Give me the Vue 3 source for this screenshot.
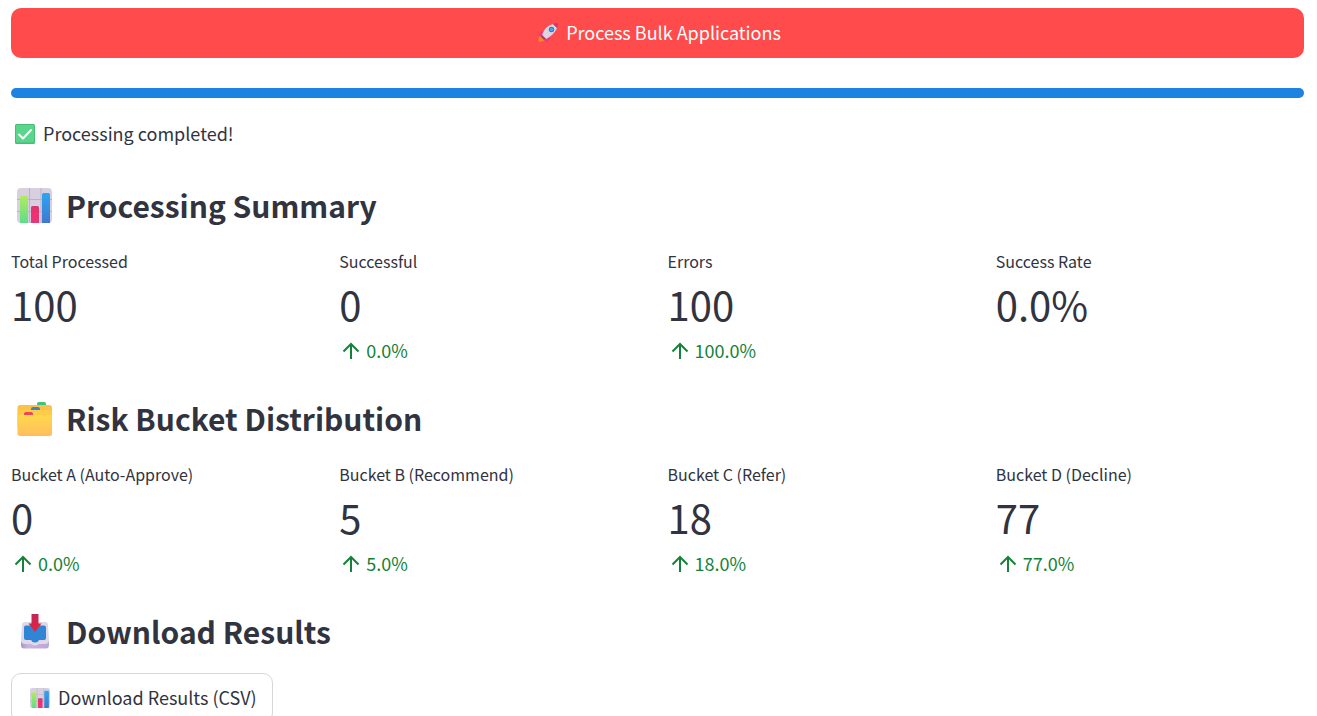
<script setup>
const sections = [
  {
    title: 'Processing Summary',
    icon: 'chart',
    metrics: [
      { label: 'Total Processed', value: '100' },
      { label: 'Successful', value: '0', delta: '0.0%' },
      { label: 'Errors', value: '100', delta: '100.0%' },
      { label: 'Success Rate', value: '0.0%' },
    ],
  },
  {
    title: 'Risk Bucket Distribution',
    icon: 'folder',
    metrics: [
      { label: 'Bucket A (Auto-Approve)', value: '0', delta: '0.0%' },
      { label: 'Bucket B (Recommend)', value: '5', delta: '5.0%' },
      { label: 'Bucket C (Refer)', value: '18', delta: '18.0%' },
      { label: 'Bucket D (Decline)', value: '77', delta: '77.0%' },
    ],
  },
]
</script>

<template>
  <svg class="defs" width="0" height="0" aria-hidden="true">
    <defs>
      <linearGradient id="g-green" x1="0" y1="0" x2="0" y2="1">
        <stop offset="0" stop-color="#b0ec5c" /><stop offset="1" stop-color="#5fdc8c" />
      </linearGradient>
      <linearGradient id="g-pink" x1="0" y1="0" x2="0" y2="1">
        <stop offset="0" stop-color="#d03a72" /><stop offset="0.4" stop-color="#f03070" /><stop offset="1" stop-color="#e03a78" />
      </linearGradient>
      <linearGradient id="g-blue" x1="0" y1="0" x2="0" y2="1">
        <stop offset="0" stop-color="#2ca6f4" /><stop offset="1" stop-color="#3f78cc" />
      </linearGradient>
      <linearGradient id="g-folder" x1="0" y1="0" x2="0" y2="1">
        <stop offset="0" stop-color="#ffd84c" /><stop offset="1" stop-color="#ffbe5c" />
      </linearGradient>
      <linearGradient id="g-arrow" x1="0" y1="0" x2="0" y2="1">
        <stop offset="0" stop-color="#c02858" /><stop offset="1" stop-color="#e4243c" />
      </linearGradient>
      <linearGradient id="g-tray" x1="0" y1="0" x2="1" y2="0">
        <stop offset="0" stop-color="#a898b8" /><stop offset="0.25" stop-color="#c8b4e0" /><stop offset="1" stop-color="#bba6d6" />
      </linearGradient>
      <symbol id="chart" viewBox="0 0 35 35">
        <rect width="35" height="35" rx="4" fill="#d8d0e0" />
        <path d="M0 11.500H35M0 23.500H35M12.500 0V35M24 0V35" stroke="#bcb2c4" stroke-width="1" />
        <path d="M3 35V9.500Q3 8 4.500 8H9.500Q11 8 11 9.500V35Z" fill="url(#g-green)" />
        <path d="M14 35V19.500Q14 18 15.500 18H20.500Q22 18 22 19.500V35Z" fill="url(#g-pink)" />
        <path d="M25 35V6.500Q25 5 26.500 5H31.500Q33 5 33 6.500V35Z" fill="url(#g-blue)" />
      </symbol>
      <symbol id="folder" viewBox="0 0 35 35">
        <path d="M20 6V3Q20 1 22 1H27Q29 1 29 3V6Z" fill="#3fc07c" />
        <path d="M.5 7Q.5 4 3 4H32Q35 4 35 7V25H.500Z" fill="#fac248" />
        <path d="M14 11V8Q14 6 16 6H21Q23 6 23 8V11Z" fill="#3f84c8" />
        <path d="M.500 11Q.500 9 3 9H32Q35 9 35 11V28H.500Z" fill="#ffcc48" />
        <path d="M7 16V13Q7 11 9 11H14Q16 11 16 13V16Z" fill="#f04458" />
        <path d="M.500 16Q.500 14 3 14H32Q35 14 35 16V32.500Q35 35 32.500 35H3Q.500 35 .500 32.500Z" fill="url(#g-folder)" />
      </symbol>
      <symbol id="inbox" viewBox="0 0 35 35">
        <path d="M4 27H32V31Q32 34.500 29 34.500H7Q4 34.500 4 31Z" fill="url(#g-tray)" />
        <path d="M8 8H28Q31 8 31 11L32 26Q32 30 28 30H22Q18 33 14 30H8Q4 30 4 26L5 11Q5 8 8 8Z" fill="#e0d8e8" />
        <path d="M9 11.500H27Q29 11.500 29 13.500V24Q29 26 27 26H22Q21 28.500 18 28.500Q15 28.500 14 26H9Q7 26 7 24V13.500Q7 11.500 9 11.500Z" fill="#2f86d4" />
        <path d="M14.500 0H21.500V9.500H24.500L18 18L11.500 9.500H14.500Z" fill="url(#g-arrow)" />
      </symbol>
      <symbol id="check" viewBox="0 0 20 20">
        <rect width="20" height="20" rx="1.500" fill="#46be78" />
        <rect x="1" y="1" width="18" height="17.500" rx="1" fill="#5ad68c" />
        <path d="M4 10.500L8 14.500L16 6" fill="none" stroke="#fff" stroke-width="2" stroke-linecap="round" stroke-linejoin="round" />
      </symbol>
      <symbol id="rocket" viewBox="0 0 20 20">
        <path d="M1 14Q4 12 6 15Q8 17 5 18L1 19Q0 17 1 14Z" fill="#f08a28" />
        <path d="M1 13Q1 9 4 8L8 7L6 13ZM7 15L13 12Q13 17 9 19Q8 20 7 18Z" fill="#f0387c" />
        <path d="M4 12Q7 3 15 1L19 5Q16 12 8 16Z" fill="#ddd5e2" />
        <path d="M15 1Q18 0 20 0Q20 3 19 5Z" fill="#d63468" />
        <path d="M4 12L8 16L6 17L3 14Z" fill="#b83866" />
        <circle cx="13.500" cy="6.500" r="2.700" fill="#526d9a" /><circle cx="13.500" cy="6.500" r="1.800" fill="#42a5ed" />
      </symbol>
    </defs>
  </svg>
  <main class="page">
    <button class="primary" type="button">
      <svg class="emoji" aria-hidden="true"><use href="#rocket" /></svg>
      <span class="text">Process Bulk Applications</span>
    </button>
    <div class="progress" role="progressbar" aria-label="Processing" aria-valuenow="100" aria-valuemin="0" aria-valuemax="100"></div>
    <p class="status">
      <svg class="emoji" aria-hidden="true"><use href="#check" /></svg>
      <span class="text">Processing completed!</span>
    </p>
    <section v-for="s in sections" :key="s.title" class="section">
      <h3 class="heading">
        <svg class="heading-icon" aria-hidden="true"><use :href="'#' + s.icon" /></svg>
        <span>{{ s.title }}</span>
      </h3>
      <div class="metrics">
        <div v-for="m in s.metrics" :key="m.label">
          <div class="label">{{ m.label }}</div>
          <div class="value">{{ m.value }}</div>
          <div v-if="m.delta" class="delta">
            <svg class="arrow" viewBox="0 0 18 18" aria-hidden="true">
              <path d="M9 17V2M1.500 9.500L9 2L16.500 9.500" fill="none" stroke="currentColor" stroke-width="2" />
            </svg>
            <span class="text">{{ m.delta }}</span>
          </div>
        </div>
      </div>
    </section>
    <section>
      <h3 class="heading">
        <svg class="heading-icon" aria-hidden="true"><use href="#inbox" /></svg>
        <span>Download Results</span>
      </h3>
      <button class="download" type="button">
        <svg class="emoji" aria-hidden="true"><use href="#chart" /></svg>
        <span class="text">Download Results (CSV)</span>
      </button>
    </section>
  </main>
</template>

<style>
body {
  background: #fff;
}
</style>

<style scoped>
.defs {
  position: absolute;
}
.page {
  box-sizing: border-box;
  height: 100vh;
  overflow: hidden;
  padding: 8px 13px 0 11px;
  color: #31333f;
  font-family: "Noto Sans CJK SC", "Noto Sans", sans-serif;
  font-size: 18px;
}
button {
  display: flex;
  align-items: center;
  justify-content: center;
  gap: 8px;
  height: 50px;
  border-radius: 10px;
  font: inherit;
  cursor: pointer;
}
.text {
  padding-bottom: 2px;
  line-height: 28px;
}
.primary {
  width: 100%;
  padding: 0 6px 0 10px;
  border: 0;
  background: #ff4b4b;
  color: #fff;
}
.progress {
  height: 10px;
  margin-top: 30px;
  border-radius: 5px;
  background: #1c83e1;
}
.emoji {
  flex: none;
  width: 20px;
  height: 20px;
}
.status {
  display: flex;
  align-items: center;
  gap: 8px;
  height: 32px;
  margin: 20px 0 35px;
  padding-left: 4px;
}
.section {
  margin-bottom: 32px;
}
.heading {
  display: flex;
  align-items: center;
  gap: 14px;
  margin: 0 0 20px;
  padding: 0 0 1px 6px;
  font-size: 30px;
  font-weight: 600;
  line-height: 41px;
}
.heading-icon {
  flex: none;
  width: 35px;
  height: 35px;
}
.metrics {
  display: grid;
  grid-template-columns: repeat(4, 1fr);
  gap: 20px;
}
.label {
  font-size: 16px;
  line-height: 28px;
}
.value {
  padding-bottom: 3px;
  font-size: 40px;
  line-height: 58px;
}
.delta {
  display: flex;
  align-items: center;
  gap: 6px;
  padding-left: 3px;
}
.delta {
  color: #158237;
}
.arrow {
  width: 18px;
  height: 18px;
}
.download {
  padding: 0 15px 0 18px;
  border: 1px solid #d6d6d9;
  background: #fff;
  color: inherit;
}
</style>
